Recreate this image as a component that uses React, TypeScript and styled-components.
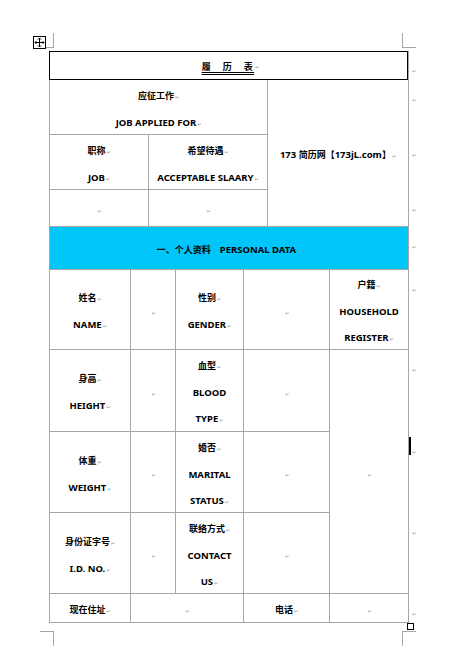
import React from 'react';
import styled, { createGlobalStyle } from 'styled-components';

const Global = createGlobalStyle`
  html, body { margin: 0; padding: 0; background: #fff; }
  body { font-family: "Noto Sans", "Noto Sans CJK SC", sans-serif; color: #000; }
`;

const Page = styled.div`
  position: relative;
  width: 460px;
  height: 657px;
  padding: 51px 0 0 49px;
  box-sizing: border-box;
  overflow: hidden;
`;

const Sheet = styled.div`
  display: flex;
  align-items: flex-start;
`;

const TableCol = styled.div`
  display: flex;
  flex-direction: column;
  width: 360px;
`;

const TitleBox = styled.div`
  box-sizing: border-box;
  width: 359px;
  height: 29px;
  border: 1px solid #000;
  box-shadow: 1px 0 0 #a6a6a6;
  display: flex;
  align-items: center;
  justify-content: center;
  padding: 2px 0 0 4px;
  font-weight: 700;
`;

const TitleText = styled.span`
  font-family: "Noto Sans CJK SC", sans-serif;
  font-size: 9px;
  line-height: 14px;
  letter-spacing: 1.5px;
  text-decoration: underline double;
  text-underline-offset: 2px;
  white-space: pre;
`;

const Grid = styled.div`
  display: grid;
  grid-template-columns: 80px 17px 26px 67px 23px 61px 78px;
  grid-template-rows: 54px 54px 36px 42px 79px 81px 80px 80px 28px;
  gap: 1px;
  padding: 0 1px 1px 1px;
  background: #a6a6a6;
`;

const Cell = styled.div<{ $c: string; $r: string; $bg?: string }>`
  grid-column: ${(p) => p.$c};
  grid-row: ${(p) => p.$r};
  background: ${(p) => p.$bg ?? '#fff'};
  box-sizing: border-box;
  padding-top: 5px;
  display: flex;
  flex-direction: column;
  align-items: center;
  justify-content: center;
  font-size: 9.5px;
  font-weight: 700;
  line-height: 26px;
  text-align: center;
`;

const Line = styled.div`
  white-space: nowrap;
`;

const Cn = styled.span`
  font-family: "Noto Sans CJK SC", sans-serif;
  font-size: 9px;
`;

const Mark = styled.span`
  font-family: "DejaVu Sans", sans-serif;
  font-size: 5px;
  font-weight: 400;
  color: #9a9a9a;
  margin-left: 1px;
`;

const MarkCol = styled.div`
  display: grid;
  grid-template-rows: 28px 54px 54px 36px 42px 79px 81px 80px 80px 28px;
  row-gap: 1px;
  margin-left: 2px;
`;

const MarkSlot = styled.div`
  padding-top: 12px;
  line-height: 8px;
`;

const Corner = styled.div<{ $x: number; $y: number; $h: 'l' | 'r'; $v: 'u' | 'd' }>`
  position: absolute;
  left: ${(p) => (p.$h === 'l' ? p.$x - 14 : p.$x)}px;
  top: ${(p) => (p.$v === 'u' ? p.$y - 15 : p.$y)}px;
  width: 14px;
  height: 15px;
  box-sizing: border-box;
  border-color: #a6a6a6;
  border-style: solid;
  border-width: 0;
  ${(p) => (p.$h === 'l' ? 'border-right-width: 1px;' : 'border-left-width: 1px;')}
  ${(p) => (p.$v === 'u' ? 'border-bottom-width: 1px;' : 'border-top-width: 1px;')}
`;

const MoveHandle = styled.div`
  position: absolute;
  left: 33px;
  top: 36px;
  width: 13px;
  height: 13px;
  box-sizing: border-box;
  border: 1px solid #000;
  background: #fff;
  display: flex;
  align-items: center;
  justify-content: center;
`;

const ResizeHandle = styled.div`
  position: absolute;
  left: 407px;
  top: 623px;
  width: 7px;
  height: 7px;
  box-sizing: border-box;
  border: 1px solid #000;
  background: #fff;
`;

const Caret = styled.div`
  position: absolute;
  left: 409px;
  top: 437px;
  width: 2px;
  height: 18px;
  background: #000;
`;

const M = () => <Mark>↵</Mark>;

const rowMarks = Array.from({ length: 10 });

export default function App() {
  return (
    <Page>
      <Global />
      <Sheet>
        <TableCol>
          <TitleBox>
            <TitleText>履　历　表</TitleText>
            <M />
          </TitleBox>
          <Grid>
            <Cell $c="1 / 6" $r="1">
              <Line><Cn>应征工作</Cn><M /></Line>
              <Line>JOB APPLIED FOR<M /></Line>
            </Cell>
            <Cell $c="6 / 8" $r="1 / 4">
              <Line>173 <Cn>简历网【</Cn>173jL.com<Cn>】</Cn><M /></Line>
            </Cell>
            <Cell $c="1 / 3" $r="2">
              <Line><Cn>职称</Cn><M /></Line>
              <Line>JOB<M /></Line>
            </Cell>
            <Cell $c="3 / 6" $r="2">
              <Line><Cn>希望待遇</Cn><M /></Line>
              <Line>ACCEPTABLE SLAARY<M /></Line>
            </Cell>
            <Cell $c="1 / 3" $r="3"><Line><M /></Line></Cell>
            <Cell $c="3 / 6" $r="3"><Line><M /></Line></Cell>

            <Cell $c="1 / 8" $r="4" $bg="#00c6fa">
              <Line><Cn>一、个人资料　</Cn>PERSONAL DATA<M /></Line>
            </Cell>

            <Cell $c="1" $r="5">
              <Line><Cn>姓名</Cn><M /></Line>
              <Line>NAME<M /></Line>
            </Cell>
            <Cell $c="2 / 4" $r="5"><Line><M /></Line></Cell>
            <Cell $c="4" $r="5">
              <Line><Cn>性别</Cn><M /></Line>
              <Line>GENDER<M /></Line>
            </Cell>
            <Cell $c="5 / 7" $r="5"><Line><M /></Line></Cell>
            <Cell $c="7" $r="5">
              <Line><Cn>户籍</Cn><M /></Line>
              <Line>HOUSEHOLD</Line>
              <Line>REGISTER<M /></Line>
            </Cell>

            <Cell $c="1" $r="6">
              <Line><Cn>身高</Cn><M /></Line>
              <Line>HEIGHT<M /></Line>
            </Cell>
            <Cell $c="2 / 4" $r="6"><Line><M /></Line></Cell>
            <Cell $c="4" $r="6">
              <Line><Cn>血型</Cn><M /></Line>
              <Line>BLOOD</Line>
              <Line>TYPE<M /></Line>
            </Cell>
            <Cell $c="5 / 7" $r="6"><Line><M /></Line></Cell>
            <Cell $c="7" $r="6 / 9"><Line><M /></Line></Cell>

            <Cell $c="1" $r="7">
              <Line><Cn>体重</Cn><M /></Line>
              <Line>WEIGHT<M /></Line>
            </Cell>
            <Cell $c="2 / 4" $r="7"><Line><M /></Line></Cell>
            <Cell $c="4" $r="7">
              <Line><Cn>婚否</Cn><M /></Line>
              <Line>MARITAL</Line>
              <Line>STATUS<M /></Line>
            </Cell>
            <Cell $c="5 / 7" $r="7"><Line><M /></Line></Cell>

            <Cell $c="1" $r="8">
              <Line><Cn>身份证字号</Cn><M /></Line>
              <Line>I.D. NO.<M /></Line>
            </Cell>
            <Cell $c="2 / 4" $r="8"><Line><M /></Line></Cell>
            <Cell $c="4" $r="8">
              <Line><Cn>联络方式</Cn><M /></Line>
              <Line>CONTACT</Line>
              <Line>US<M /></Line>
            </Cell>
            <Cell $c="5 / 7" $r="8"><Line><M /></Line></Cell>

            <Cell $c="1" $r="9"><Line><Cn>现在住址</Cn><M /></Line></Cell>
            <Cell $c="2 / 5" $r="9"><Line><M /></Line></Cell>
            <Cell $c="5 / 7" $r="9"><Line><Cn>电话</Cn><M /></Line></Cell>
            <Cell $c="7" $r="9"><Line><M /></Line></Cell>
          </Grid>
        </TableCol>
        <MarkCol>
          {rowMarks.map((_, i) => (
            <MarkSlot key={i}><M /></MarkSlot>
          ))}
        </MarkCol>
      </Sheet>

      <Corner $x={54} $y={48} $h="l" $v="u" />
      <Corner $x={402} $y={48} $h="r" $v="u" />
      <Corner $x={54} $y={631} $h="l" $v="d" />
      <Corner $x={402} $y={631} $h="r" $v="d" />
      <MoveHandle>
        <svg width="11" height="11" viewBox="0 0 11 11" fill="none" stroke="#000" strokeWidth="1">
          <path d="M5.5 1v9M1 5.5h9" />
          <path d="M4 2.5l1.5-1.5 1.5 1.5M4 8.5l1.5 1.5 1.5-1.5M2.5 4L1 5.5 2.5 7M8.5 4L10 5.5 8.5 7" />
        </svg>
      </MoveHandle>
      <ResizeHandle />
      <Caret />
    </Page>
  );
}
